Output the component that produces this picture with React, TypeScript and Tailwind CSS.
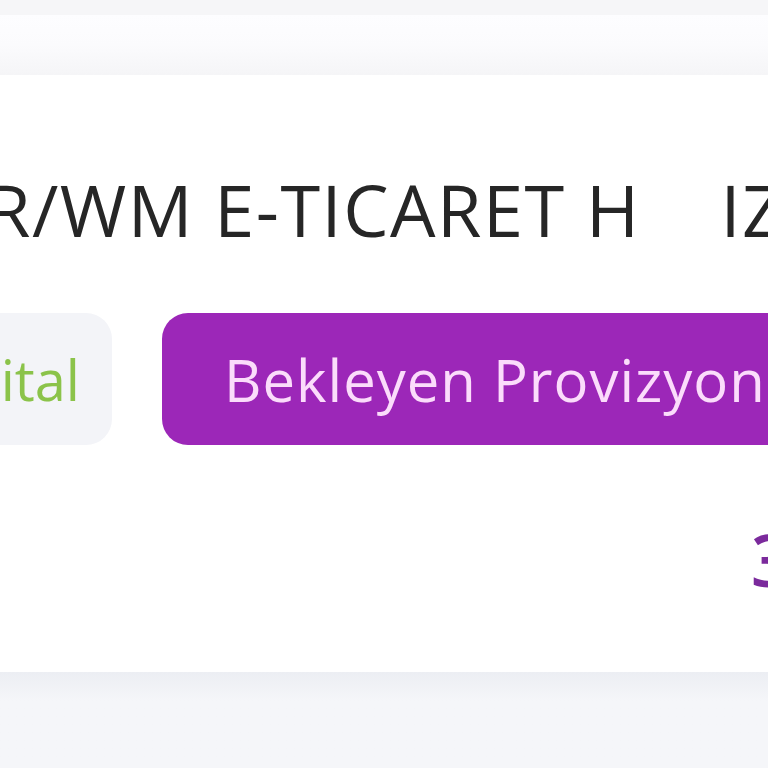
import React from "react";

export default function App() {
  return (
    <div className="w-[768px] h-[768px] overflow-hidden flex flex-col bg-[#f7f7f8] font-['Open_Sans',sans-serif]">
      {/* top strip */}
      <div className="h-[15px] shrink-0 bg-[#f6f6f8]" />
      {/* header band */}
      <div className="h-[60px] shrink-0 bg-gradient-to-b from-[#fdfdff] via-[#fbfbfd] to-[#f5f5f7]" />

      {/* card */}
      <div className="h-[597px] shrink-0 bg-white flex flex-col overflow-hidden">
        <div className="mt-[98px] flex items-baseline whitespace-nowrap text-[72px] leading-none text-[#262626] tracking-[1.5px]">
          <span className="ml-[-14px]">R/WM E-TICARET H</span>
          <span className="ml-[80px]">IZ</span>
        </div>

        <div className="mt-[68px] flex items-center gap-[50px] whitespace-nowrap">
          <div className="ml-[-60px] h-[132px] w-[172px] shrink-0 rounded-[26px] bg-[#f3f4f8] flex items-center justify-end pr-[32px] text-[56px] text-[#8bc34a]">
            ital
          </div>
          <div className="h-[132px] w-[680px] shrink-0 rounded-[26px] bg-[#9c27b8] flex items-center pl-[62px] text-[58px] tracking-[1px] text-[#fbdcfb]">
            Bekleyen Provizyon
          </div>
        </div>

        <div className="mt-[78px] flex justify-end overflow-hidden">
          <span className="mr-[-24px] text-[72px] leading-none font-semibold text-[#7b2a9c]">3</span>
        </div>
      </div>

      {/* bottom gray area */}
      <div className="flex-1 bg-gradient-to-b from-[#eceef3] to-[#f5f6f9] to-[30%]" />
    </div>
  );
}
